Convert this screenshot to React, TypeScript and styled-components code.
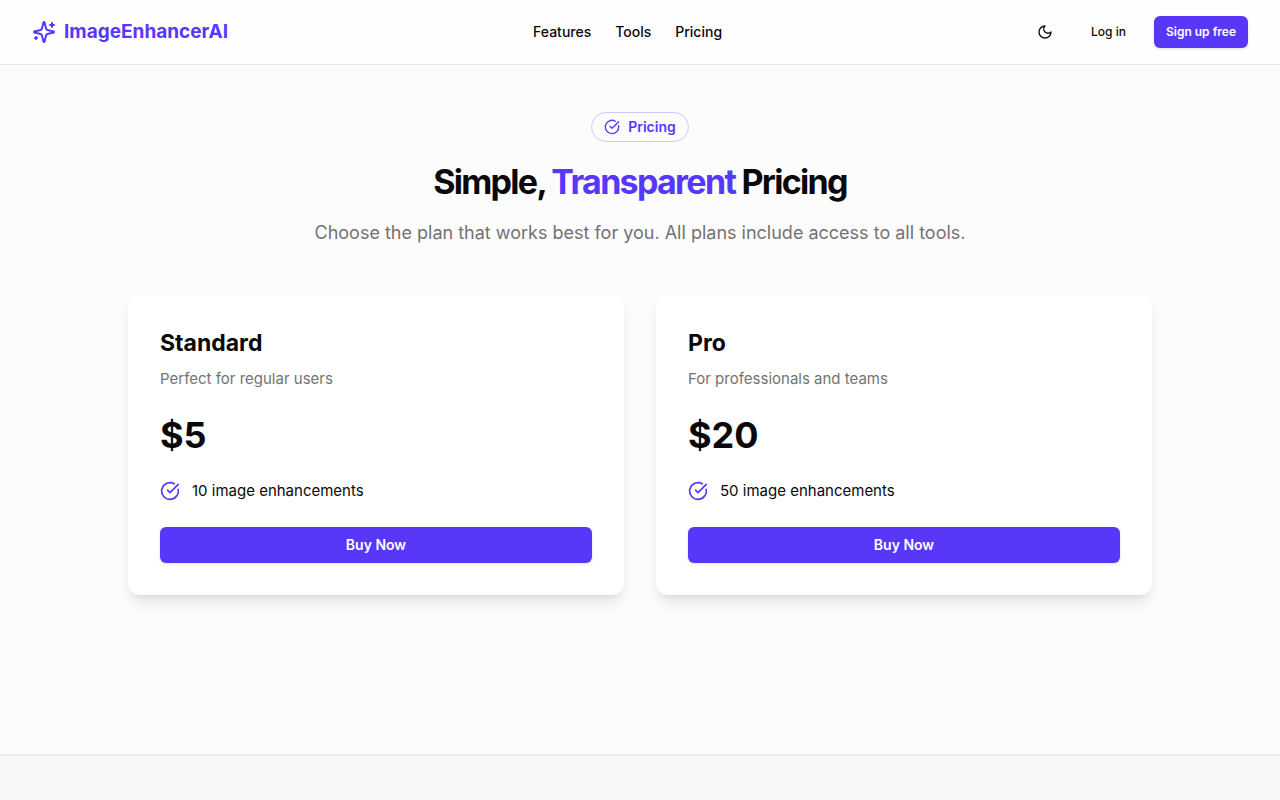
import React from "react";
import styled, { createGlobalStyle } from "styled-components";

const color = {
  primary: "#5837f8",
  ink: "#09090b",
  muted: "#737373",
  page: "#fcfcfc",
  line: "#e5e5e5",
};

const GlobalStyle = createGlobalStyle`
  *, *::before, *::after { box-sizing: border-box; }
  html, body { margin: 0; }
  body {
    background: ${color.page};
    color: ${color.ink};
    font-family: Inter, "Liberation Sans", sans-serif;
    font-size: 15px;
    line-height: 24px;
    -webkit-font-smoothing: antialiased;
  }
  h1, h2, p, ul { margin: 0; padding: 0; }
`;

const Page = styled.div`
  display: flex;
  flex-direction: column;
  min-height: 100vh;
`;

const Header = styled.header`
  display: flex;
  align-items: center;
  justify-content: space-between;
  height: 65px;
  padding: 0 32px;
  background: #fefefe;
  border-bottom: 1px solid ${color.line};
`;

const Brand = styled.a`
  display: flex;
  align-items: center;
  gap: 8px;
  color: ${color.primary};
  font-size: 19px;
  line-height: 28px;
  font-weight: 700;
  text-decoration: none;
`;

const Nav = styled.nav`
  display: flex;
  gap: 24px;
`;

const NavLink = styled.a`
  color: ${color.ink};
  font-size: 14px;
  line-height: 20px;
  font-weight: 500;
  text-decoration: none;
`;

const Actions = styled.div`
  display: flex;
  align-items: center;
  gap: 16px;
`;

const Button = styled.button<{ $variant?: "primary" | "ghost"; $size?: "sm" | "md" | "icon" }>`
  display: inline-flex;
  align-items: center;
  justify-content: center;
  height: ${({ $size }) => ($size === "sm" ? 32 : 36)}px;
  width: ${({ $size }) => ($size === "sm" ? "auto" : $size === "icon" ? "36px" : "100%")};
  padding: 0 ${({ $size }) => ($size === "icon" ? 0 : 12)}px;
  border: 0;
  border-radius: 6px;
  cursor: pointer;
  font-family: inherit;
  font-size: ${({ $size }) => ($size === "sm" ? 12 : 14)}px;
  line-height: 20px;
  font-weight: ${({ $variant }) => ($variant === "ghost" ? 500 : 600)};
  color: ${({ $variant }) => ($variant === "ghost" ? color.ink : "#fff")};
  background: ${({ $variant }) => ($variant === "ghost" ? "transparent" : color.primary)};
  box-shadow: ${({ $variant }) => ($variant === "ghost" ? "none" : "0 1px 3px rgba(0, 0, 0, 0.12)")};
`;

const Main = styled.main`
  display: flex;
  flex-direction: column;
  align-items: center;
  flex: 1 0 auto;
  width: 100%;
  max-width: 1088px;
  margin: 0 auto;
  padding: 47px 32px 159px;
`;

const Badge = styled.span`
  display: inline-flex;
  align-items: center;
  gap: 8px;
  height: 30px;
  padding: 0 12px;
  border: 1px solid #d0c8fb;
  border-radius: 15px;
  color: ${color.primary};
  font-size: 14px;
  line-height: 20px;
  font-weight: 600;
`;

const Title = styled.h1`
  margin-top: 20px;
  font-size: 34px;
  line-height: 40px;
  font-weight: 700;
  letter-spacing: -0.05em;
  text-align: center;

  em {
    color: ${color.primary};
    font-style: normal;
  }
`;

const Subtitle = styled.p`
  margin-top: 17px;
  color: ${color.muted};
  font-size: 18px;
  line-height: 28px;
  text-align: center;
`;

const Plans = styled.div`
  display: grid;
  grid-template-columns: repeat(auto-fit, minmax(320px, 1fr));
  gap: 32px;
  width: 100%;
  margin-top: 48px;
`;

const Card = styled.article`
  display: flex;
  flex-direction: column;
  gap: 24px;
  padding: 32px;
  border-radius: 12px;
  background: #fff;
  box-shadow: 0 10px 15px -3px rgba(0, 0, 0, 0.1), 0 4px 6px -4px rgba(0, 0, 0, 0.1);
`;

const CardHead = styled.div`
  display: flex;
  flex-direction: column;
  gap: 8px;
`;

const PlanName = styled.h2`
  font-size: 23px;
  line-height: 32px;
  font-weight: 700;
`;

const PlanNote = styled.p`
  color: ${color.muted};
`;

const Price = styled.p`
  font-size: 36px;
  line-height: 40px;
  font-weight: 700;
`;

const Perks = styled.ul`
  list-style: none;
`;

const Perk = styled.li`
  display: flex;
  align-items: center;
  gap: 12px;

  svg { color: ${color.primary}; }
`;

const Footer = styled.footer`
  height: 46px;
  background: #f8f8f8;
  border-top: 2px solid #ececec;
`;

const Icon = ({ size, children }: { size: number; children: React.ReactNode }) => (
  <svg
    width={size}
    height={size}
    viewBox="0 0 24 24"
    fill="none"
    stroke="currentColor"
    strokeWidth="2"
    strokeLinecap="round"
    strokeLinejoin="round"
    aria-hidden="true"
  >
    {children}
  </svg>
);

const SparklesIcon = () => (
  <Icon size={24}>
    <path d="M9.937 15.5A2 2 0 0 0 8.5 14.063l-6.135-1.582a.5.5 0 0 1 0-.962L8.5 9.936A2 2 0 0 0 9.937 8.5l1.582-6.135a.5.5 0 0 1 .963 0L14.063 8.5A2 2 0 0 0 15.5 9.937l6.135 1.581a.5.5 0 0 1 0 .964L15.5 14.063a2 2 0 0 0-1.437 1.437l-1.582 6.135a.5.5 0 0 1-.963 0z" />
    <path d="M20 3v4M22 5h-4M4 17v2M5 18H3" />
  </Icon>
);

const CheckIcon = ({ size }: { size: number }) => (
  <Icon size={size}>
    <path d="M21.801 10A10 10 0 1 1 17 3.335" />
    <path d="m9 11 3 3L22 4" />
  </Icon>
);

const MoonIcon = () => (
  <Icon size={16}>
    <path d="M12 3a6 6 0 0 0 9 9 9 9 0 1 1-9-9Z" />
  </Icon>
);

const plans = [
  { name: "Standard", note: "Perfect for regular users", price: "$5", perk: "10 image enhancements" },
  { name: "Pro", note: "For professionals and teams", price: "$20", perk: "50 image enhancements" },
];

export default function App() {
  return (
    <Page>
      <GlobalStyle />
      <Header>
        <Brand href="#">
          <SparklesIcon />
          ImageEnhancerAI
        </Brand>
        <Nav>
          <NavLink href="#features">Features</NavLink>
          <NavLink href="#tools">Tools</NavLink>
          <NavLink href="#pricing">Pricing</NavLink>
        </Nav>
        <Actions>
          <Button $variant="ghost" $size="icon" aria-label="Toggle theme">
            <MoonIcon />
          </Button>
          <Button $variant="ghost" $size="sm">Log in</Button>
          <Button $size="sm">Sign up free</Button>
        </Actions>
      </Header>
      <Main>
        <Badge>
          <CheckIcon size={16} />
          Pricing
        </Badge>
        <Title>
          Simple, <em>Transparent</em> Pricing
        </Title>
        <Subtitle>Choose the plan that works best for you. All plans include access to all tools.</Subtitle>
        <Plans>
          {plans.map((plan) => (
            <Card key={plan.name}>
              <CardHead>
                <PlanName>{plan.name}</PlanName>
                <PlanNote>{plan.note}</PlanNote>
              </CardHead>
              <Price>{plan.price}</Price>
              <Perks>
                <Perk>
                  <CheckIcon size={20} />
                  {plan.perk}
                </Perk>
              </Perks>
              <Button>Buy Now</Button>
            </Card>
          ))}
        </Plans>
      </Main>
      <Footer />
    </Page>
  );
}
